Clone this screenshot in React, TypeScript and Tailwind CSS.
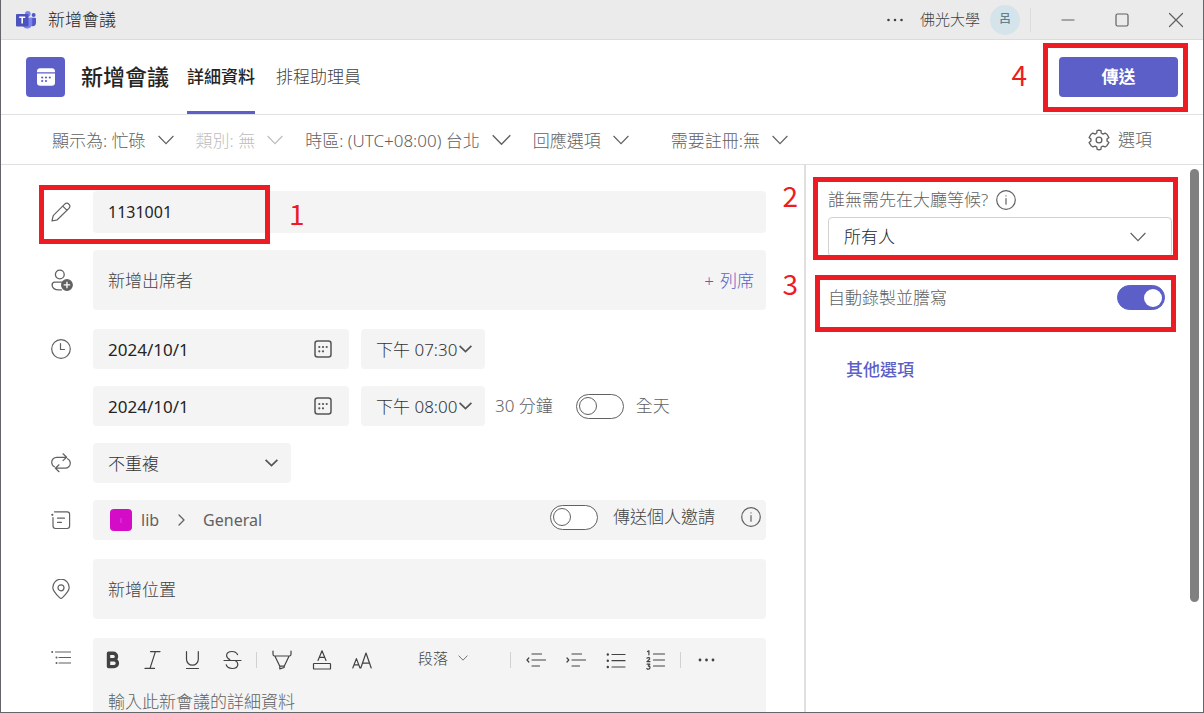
import { useState } from 'react';
import type { ReactNode } from 'react';
import clsx from 'clsx';

interface IconProps {
  className?: string;
  children: ReactNode;
  width?: number;
}

function Icon({ className, children, width = 1.2 }: IconProps) {
  return (
    <svg
      viewBox="0 0 20 20"
      fill="none"
      stroke="currentColor"
      strokeWidth={width}
      strokeLinecap="round"
      strokeLinejoin="round"
      className={clsx('shrink-0', className ?? 'size-5')}
      aria-hidden="true"
    >
      {children}
    </svg>
  );
}

function Chevron({ className }: { className?: string }) {
  return (
    <svg viewBox="0 0 16 10" fill="none" stroke="currentColor" strokeWidth="1.2" className={clsx('pointer-events-none shrink-0', className)} aria-hidden="true">
      <path d="M0.6 1 8 8.6 15.4 1" />
    </svg>
  );
}

function BoldChevron({ className }: { className?: string }) {
  return (
    <svg viewBox="0 0 13 8" fill="none" stroke="currentColor" strokeWidth="1.7" className={clsx('pointer-events-none h-2 w-[13px] shrink-0 text-[#555]', className)} aria-hidden="true">
      <path d="M0.6 0.8 6.5 6.6 12.4 0.8" />
    </svg>
  );
}

function InfoIcon() {
  return (
    <Icon className="size-5 text-[#616161]">
      <circle cx="10" cy="10" r="9.3" />
      <path d="M10 8.6v5.6M10 5.8v.1" />
    </Icon>
  );
}

function TeamsLogo() {
  return (
    <svg viewBox="0 0 20 18" className="h-[18px] w-5 shrink-0" aria-hidden="true">
      <circle cx="17.6" cy="3.9" r="2" fill="#5059c9" />
      <path d="M14 6.8h5.2c.5 0 .8.3.8.8v4.2a3.4 3.4 0 0 1-3.4 3.4A3 3 0 0 1 14 13.6z" fill="#5059c9" />
      <circle cx="11.8" cy="2.9" r="2.8" fill="#7b83eb" />
      <path d="M7 6.8h8.4c.5 0 .8.3.8.8v5.2a5 5 0 0 1-9.8 1z" fill="#7b83eb" />
      <rect x="0" y="3" width="12.5" height="12.5" rx="1" fill="#4b53bc" />
      <path d="M3.2 6.2h6M6.2 6.2v6.4" stroke="#fff" strokeWidth="1.6" />
    </svg>
  );
}

function CalendarBadge() {
  return (
    <div className="flex h-10 w-[39px] items-center justify-center rounded bg-[#5b5fc7]">
      <svg viewBox="0 0 18 18" className="size-[18px]" aria-hidden="true">
        <path d="M0 4.2V3.5A3.2 3.2 0 0 1 3.2.2h11.6A3.2 3.2 0 0 1 18 3.5v.7z" fill="#fff" />
        <path d="M0 5.6h18v9a3.2 3.2 0 0 1-3.2 3.2H3.2A3.2 3.2 0 0 1 0 14.6z" fill="#fff" />
        <g fill="#5b5fc7">
          <circle cx="5.2" cy="9.5" r="1.1" />
          <circle cx="9" cy="9.5" r="1.1" />
          <circle cx="12.8" cy="9.5" r="1.1" />
          <circle cx="5.2" cy="13" r="1.1" />
          <circle cx="9" cy="13" r="1.1" />
        </g>
      </svg>
    </div>
  );
}

function Marker({ className }: { className: string }) {
  return <div className={clsx('pointer-events-none absolute border-5 border-[#ed1c24]', className)} />;
}

function Step({ children, className }: { children: ReactNode; className: string }) {
  return (
    <span className={clsx("pointer-events-none absolute font-['Noto_Sans_CJK_TC',sans-serif] text-[28px] leading-7 font-normal text-[#ed1c24]", className)}>
      {children}
    </span>
  );
}

interface ToolbarSelectProps {
  label: string;
  options: string[];
  disabled?: boolean;
  large?: boolean;
}

function ToolbarSelect({ label, options, disabled, large }: ToolbarSelectProps) {
  return (
    <div className={clsx('flex items-center gap-3', disabled ? 'text-[#bdbdbd]' : 'text-[#616161]')}>
      <select aria-label={label} disabled={disabled} className="field-sizing-content appearance-none bg-transparent pt-0.5 opacity-100 outline-none">
        {options.map((option) => (
          <option key={option}>{option}</option>
        ))}
      </select>
      <Chevron className={large ? 'h-3 w-[19px]' : 'h-2.5 w-4'} />
    </div>
  );
}

interface SwitchProps {
  id: string;
  checked: boolean;
  onChange: (value: boolean) => void;
}

function Switch({ id, checked, onChange }: SwitchProps) {
  return (
    <input
      id={id}
      type="checkbox"
      role="switch"
      checked={checked}
      onChange={(e) => onChange(e.target.checked)}
      className={clsx(
        'flex h-[25px] w-12 shrink-0 appearance-none items-center rounded-full border px-0.5 before:block before:rounded-full',
        checked
          ? 'justify-end border-[#5b5fc7] bg-[#5b5fc7] before:size-[18px] before:bg-white'
          : 'justify-start border-[#616161] bg-white before:size-[18px] before:border before:border-[#616161]',
      )}
    />
  );
}

function Row({ icon, children, className }: { icon?: ReactNode; children: ReactNode; className?: string }) {
  return (
    <div className={clsx('relative flex gap-[22px]', className ?? 'items-center')}>
      <div className="w-5 shrink-0 text-[#616161]">{icon}</div>
      {children}
    </div>
  );
}

function DateTime({ label, time }: { label: string; time: string }) {
  return (
    <>
      <div className="flex h-10 w-64 items-center rounded bg-[#f4f4f4] pr-4 pl-[15px]">
        <input aria-label={`${label}日期`} defaultValue="2024/10/1" className="min-w-0 flex-1 bg-transparent pt-0.5 font-normal text-[#242424] outline-none" />
        <button type="button" aria-label={`選擇${label}日期`} className="text-[#555]">
          <Icon width={1.5} className="size-5">
            <rect x="2" y="2" width="16" height="16" rx="2.5" />
            <path d="M6.3 8h.01M10 8h.01M13.7 8h.01M6.3 12.3h.01M10 12.3h.01" strokeWidth="2.2" />
          </Icon>
        </button>
      </div>
      <div className="relative ml-3 flex h-10 w-31 items-center rounded bg-[#f4f4f4]">
        <select aria-label={`${label}時間`} className="h-full w-full appearance-none bg-transparent pt-0.5 pl-[15px] text-[#333] outline-none">
          <option>{time}</option>
        </select>
        <BoldChevron className="absolute right-[13px]" />
      </div>
    </>
  );
}

function ToolButton({ label, children }: { label: string; children: ReactNode }) {
  return (
    <button type="button" aria-label={label} className="flex h-10 w-10 shrink items-center justify-center text-[#424242]">
      {children}
    </button>
  );
}

function Separator({ className }: { className: string }) {
  return <div className={clsx('h-4 w-px shrink-0 bg-[#d1d1d1]', className)} />;
}

function EditorToolbar() {
  return (
    <div className="flex h-[44px] items-center">
      <ToolButton label="粗體">
        <Icon width={3.4}>
          <path d="M5.5 3.2h4.8a3.2 3.2 0 0 1 0 6.4H5.5zM5.5 9.8h5.500a3.4 3.4 0 0 1 0 6.8H5.5z" />
        </Icon>
      </ToolButton>
      <ToolButton label="斜體">
        <Icon>
          <path d="M7.5 1.6H17M2 18.4h9.500M12.4 1.6 7 18.4" />
        </Icon>
      </ToolButton>
      <ToolButton label="底線">
        <Icon>
          <path d="M3.5 1.5v7.8a5.9 5.9 0 0 0 11.8 0V1.5M3.5 18.5h12" />
        </Icon>
      </ToolButton>
      <ToolButton label="刪除線">
        <Icon>
          <path d="M14.5 4.6C13.6 2.6 11.6 1.5 9 1.5c-3.200 0-5.400 1.600-5.400 4 0 1.700 1 3 3.200 4.100M1 10.500h17M12.500 10.700c1.500.8 2.300 1.900 2.300 3.500 0 2.600-2.300 4.300-5.600 4.300-3 0-5.200-1.300-6-3.700" />
        </Icon>
      </ToolButton>
      <Separator className="mr-[5px] ml-[3px]" />
      <ToolButton label="醒目提示">
        <Icon>
          <path d="M1 1v3.200c0 1 .7 1.800 1.700 1.800h14.600c1 0 1.700-.8 1.700-1.800V1M3 6.200l4.800 10h4.400l4.800-10M7.800 16.200v2.600l4.400-1.300v-1.300" />
        </Icon>
      </ToolButton>
      <ToolButton label="字型色彩">
        <Icon>
          <path d="M6 10.500 10 .8l4 9.700M7.400 7.400h5.200" />
          <rect x="1.5" y="13.5" width="17" height="5.5" rx=".6" />
        </Icon>
      </ToolButton>
      <ToolButton label="字型大小">
        <Icon>
          <path d="M.8 18 4.400 8.600 8 18M2 14.800h4.800M8.800 18 14 3l5.200 15M10.300 13.200h7.400" />
        </Icon>
      </ToolButton>
      <div className="ml-9 flex items-center gap-2.5 pb-1 text-[15px] text-[#424242]">
        <select aria-label="段落樣式" className="field-sizing-content appearance-none bg-transparent outline-none">
          <option>段落</option>
        </select>
        <Chevron className="h-1.5 w-2.5" />
      </div>
      <Separator className="mr-[5px] ml-[42px]" />
      <ToolButton label="減少縮排">
        <Icon>
          <path d="M6 4h9.500M6 10h13.500M6 16h7.500M2.800 8 1 10l1.800 2" />
        </Icon>
      </ToolButton>
      <ToolButton label="增加縮排">
        <Icon>
          <path d="M6 4h9.500M6 10h13.500M6 16h7.500M1 8l1.800 2L1 12" />
        </Icon>
      </ToolButton>
      <ToolButton label="項目符號清單">
        <Icon>
          <path d="M6 4.500h13M6 10.700h13M6 17h13" />
          <path d="M1.800 4.500h.01M1.800 10.700h.01M1.800 17h.01" strokeWidth="2.4" />
        </Icon>
      </ToolButton>
      <ToolButton label="編號清單">
        <Icon>
          <path d="M7.500 4h11M7.500 10h11M7.500 16h11" />
          <path d="M1.500 1.500 2.900.8v4M1 8.200c1-1.200 3-.6 2.600.8-.3.900-1.600 1.600-2.600 2.600h3M1.100 14.200h2.700l-1.500 1.900c2.400-.2 2.200 3.100-.1 3.100-.6 0-1-.2-1.300-.6" />
        </Icon>
      </ToolButton>
      <Separator className="mr-1.5 ml-1" />
      <ToolButton label="更多">
        <Icon width={2.8}>
          <path d="M3 10h.01M9.500 10h.01M16 10h.01" />
        </Icon>
      </ToolButton>
    </div>
  );
}

export default function NewMeeting() {
  const [allDay, setAllDay] = useState(false);
  const [invite, setInvite] = useState(false);
  const [record, setRecord] = useState(true);

  return (
    <div className="flex h-screen flex-col overflow-hidden border-x border-b border-[#65656b] bg-white font-['Noto_Sans','Noto_Sans_CJK_TC',sans-serif] text-[17px] leading-6 font-light text-[#242424]">
      {/* Title bar */}
      <div className="flex h-10 shrink-0 items-center border-b border-[#dcdcdc] bg-[#ebebeb] pl-[15px]">
        <TeamsLogo />
        <span className="ml-3">新增會議</span>
        <div className="ml-auto flex items-center">
          <button type="button" aria-label="更多選項" className="text-[#424242]">
            <Icon width={2.6} className="size-5">
              <path d="M4.500 10h.01M11 10h.01M17.500 10h.01" />
            </Icon>
          </button>
          <span className="ml-4 pb-0.5 text-[15px] text-[#424242]">佛光大學</span>
          <span className="ml-2.5 flex size-[30px] items-center justify-center rounded-full bg-[#d5e4ea] pb-0.5 text-xs font-medium text-[#5f7f8a]">呂</span>
          <div className="mr-2.5 ml-2.5 h-6 w-px bg-[#dcdcdc]" />
          <button type="button" aria-label="最小化" className="flex w-[54px] justify-center text-[#616161]">
            <Icon>
              <path d="M4 10h12" />
            </Icon>
          </button>
          <button type="button" aria-label="最大化" className="flex w-[54px] justify-center text-[#616161]">
            <Icon>
              <rect x="4" y="4" width="12" height="12" rx="1.5" />
            </Icon>
          </button>
          <button type="button" aria-label="關閉" className="flex w-[54px] justify-center text-[#616161]">
            <Icon>
              <path d="m3.500 3.500 13 13M16.500 3.500l-13 13" />
            </Icon>
          </button>
        </div>
      </div>

      {/* Meeting header */}
      <header className="relative flex h-[75px] shrink-0 items-center border-b border-[#e0e0e0] pr-[25px] pl-[25px]">
        <CalendarBadge />
        <h1 className="ml-4 pb-0.5 text-[22px] font-medium">新增會議</h1>
        <nav className="ml-[18px] flex h-full gap-[21px]">
          <a href="#details" className="flex items-center border-b-3 border-[#5b5fc7] pt-[3px] font-medium">詳細資料</a>
          <a href="#scheduling" className="flex items-center text-[#424242]">排程助理員</a>
        </nav>
        <button type="button" className="ml-auto h-10 w-[119px] rounded bg-[#5b5fc7] font-bold text-white">傳送</button>
        <Marker className="top-[3px] right-[15px] h-[69px] w-[145px]" />
        <Step className="top-5 right-[176px]">4</Step>
      </header>

      {/* Meeting options */}
      <div className="flex h-[50px] shrink-0 items-center gap-[22px] border-b border-[#e0e0e0] pr-[51px] pl-[51px]">
        <ToolbarSelect label="顯示為" options={['顯示為: 忙碌']} />
        <ToolbarSelect label="類別" options={['類別: 無']} disabled />
        <ToolbarSelect label="時區" options={['時區: (UTC+08:00) 台北']} large />
        <ToolbarSelect label="回應選項" options={['回應選項']} />
        <div className="ml-5">
          <ToolbarSelect label="需要註冊" options={['需要註冊:無']} />
        </div>
        <button type="button" className="ml-auto flex items-center gap-2 text-[#616161]">
          <Icon className="size-[22px]">
            <circle cx="10" cy="10" r="2.6" />
            <path d="M8.200 1.500 8 3.600 6.300 4.600 4.400 3.700 2.600 5 1 7.800l1.700 1.400v1.700L1 12.300l1.800 2.900 1.700 1.100 1.900-.8 1.600.9.300 2.100 1.700.5 1.700-.5.300-2.100 1.600-.9 1.900.8 1.700-1.100 1.800-2.900-1.700-1.400V9.200L19 7.800 17.400 5l-1.800-1.300-1.900.9L12 3.600l-.2-2.100L10 1z" />
          </Icon>
          選項
        </button>
      </div>

      <div className="flex min-h-0 flex-1">
        {/* Form */}
        <main className="relative flex min-w-0 flex-1 flex-col gap-[17px] pt-[26px] pr-[38px] pl-[50px]">
          <Row
            icon={
              <Icon>
                <path d="M1 19l1.200-5.300L13.700 2.200a3 3 0 0 1 4.200 0 3 3 0 0 1 0 4.200L6.300 17.800zM11.800 4.200l4.200 4.200" />
              </Icon>
            }
          >
            <input aria-label="標題" defaultValue="1131001" className="h-[42px] min-w-0 flex-1 rounded bg-[#f4f4f4] px-[15px] text-base font-normal outline-none" />
            <Marker className="-top-1.5 -left-3 h-[59px] w-[231px]" />
            <Step className="top-2 left-[238px]">1</Step>
          </Row>

          <Row
            className="mb-0.5 items-center"
            icon={
              <Icon className="size-[22px]">
                <circle cx="8" cy="5" r="4" />
                <path d="M9.500 19H7c-3.500 0-6-1.700-6-4.400C1 13 2 12 3.500 12h7" />
                <circle cx="14.5" cy="14.5" r="4.8" fill="currentColor" />
                <path d="M14.500 12v5M12 14.500h5" stroke="#fff" />
              </Icon>
            }
          >
            <div className="flex h-15 min-w-0 flex-1 items-center rounded bg-[#f4f4f4] pr-3 pl-[15px]">
              <input aria-label="出席者" placeholder="新增出席者" className="min-w-0 flex-1 bg-transparent pt-0.5 outline-none placeholder:text-[#424242]" />
              <button type="button" className="flex gap-1.5 pt-0.5 text-[#5b5fc7]">
                <span>+</span>
                <span>列席</span>
              </button>
            </div>
          </Row>

          <Row
            icon={
              <Icon>
                <circle cx="10" cy="10" r="9.3" />
                <path d="M9.500 4.500v6h4" />
              </Icon>
            }
          >
            <div className="flex items-center">
              <DateTime label="開始" time="下午 07:30" />
            </div>
          </Row>

          <Row>
            <div className="flex items-center text-[#616161]">
              <DateTime label="結束" time="下午 08:00" />
              <span className="ml-2.5">30 分鐘</span>
              <div className="ml-[23px] flex items-center gap-3">
                <Switch id="all-day" checked={allDay} onChange={setAllDay} />
                <label htmlFor="all-day">全天</label>
              </div>
            </div>
          </Row>

          <Row
            icon={
              <Icon>
                <path d="M3.500 13.800A5 5 0 0 1 .7 9.300 5 5 0 0 1 5.700 4.300H15.500M12 .8l3.600 3.500L12 7.600M16.500 5.700a5 5 0 0 1 2.800 4.500 5 5 0 0 1-5 5H4.600M8 11.800l-3.600 3.400L8 18.700" />
              </Icon>
            }
          >
            <div className="relative flex h-10 w-[198px] items-center rounded bg-[#f4f4f4]">
              <select aria-label="重複" className="h-full w-full appearance-none bg-transparent px-[15px] pt-0.5 text-[#333] outline-none">
                <option>不重複</option>
              </select>
              <BoldChevron className="absolute right-[13px]" />
            </div>
          </Row>

          <Row
            className="mb-0.5 items-center"
            icon={
              <Icon>
                <path d="M3.500 1.800h12.700a2.400 2.400 0 0 1 2.400 2.400v11.900a2.400 2.400 0 0 1-2.400 2.400H4.400A2.400 2.400 0 0 1 2 16.100V7.500M6.500 8.200h7M6.500 12.300h4" />
                <path d="M1.300 4.800h.01" strokeWidth="2.2" />
              </Icon>
            }
          >
            <div className="flex h-10 min-w-0 flex-1 items-center rounded bg-[#f4f4f4] pr-[5px] pl-[17px] text-[#616161]">
              <span className="flex size-[22px] items-center justify-center rounded bg-[#d40cc8] text-[8px] text-[#f08ae8]">l</span>
              <span className="ml-[9px] text-base font-normal">lib</span>
              <Icon width={1.3} className="mx-3 size-5">
                <path d="m8 5 5 5-5 5" />
              </Icon>
              <span className="text-base font-normal">General</span>
              <div className="ml-auto flex items-center pb-1.5 text-[#424242]">
                <Switch id="invite" checked={invite} onChange={setInvite} />
                <label htmlFor="invite" className="ml-[15px]">傳送個人邀請</label>
                <button type="button" aria-label="傳送個人邀請說明" className="ml-[26px]">
                  <InfoIcon />
                </button>
              </div>
            </div>
          </Row>

          <Row
            className="mb-0.5 items-center"
            icon={
              <Icon>
                <path d="M10 19.300c-.6 0-1-.3-1.400-.7C5 15 1.800 12 1.800 8.400a8.200 8.200 0 0 1 16.400 0c0 3.600-3.200 6.600-6.800 10.200-.4.4-.8.700-1.400.7z" />
                <circle cx="10" cy="8.8" r="3" />
              </Icon>
            }
          >
            <input aria-label="位置" placeholder="新增位置" className="h-15 min-w-0 flex-1 rounded bg-[#f4f4f4] px-[15px] outline-none placeholder:text-[#424242]" />
          </Row>

          <Row
            className="items-start"
            icon={
              <Icon className="mt-2.5 size-5">
                <path d="M4.500 4h15M8 9.500h11.500M8 15h11.500" />
                <path d="M1.200 4h.01M5.500 9.500h.01M5.500 15h.01" strokeWidth="2" />
              </Icon>
            }
          >
            <div className="min-w-0 flex-1 rounded bg-[#f4f4f4]">
              <EditorToolbar />
              <textarea aria-label="詳細資料" placeholder="輸入此新會議的詳細資料" className="block h-40 w-full resize-none bg-transparent px-[15px] pt-2 outline-none placeholder:text-[#616161]" />
            </div>
          </Row>
          <Step className="top-4 right-[6px]">2</Step>
          <Step className="top-[104px] right-[6px]">3</Step>
        </main>

        {/* Side options */}
        <aside className="relative flex w-[399px] shrink-0 flex-col border-l-2 border-[#e0e0e0] pt-[23px] pr-[31px] pl-[22px] text-[#616161]">
          <div className="flex items-center gap-2">
            <label htmlFor="lobby">誰無需先在大廳等候?</label>
            <InfoIcon />
          </div>
          <div className="relative mt-[5px] flex h-10 items-center">
            <select id="lobby" className="h-full w-full appearance-none rounded border border-[#d1d1d1] bg-white px-[15px] text-[#242424] outline-none">
              <option>所有人</option>
            </select>
            <Chevron className="absolute right-[26px] h-2.5 w-4" />
          </div>
          <div className="mt-7 flex items-center justify-between pr-[7px]">
            <label htmlFor="record">自動錄製並謄寫</label>
            <Switch id="record" checked={record} onChange={setRecord} />
          </div>
          <a href="#more-options" className="mt-12 self-start pl-[18px] font-medium text-[#5b5fc7]">其他選項</a>
          <Marker className="top-3 right-[25px] left-[7px] h-[83px]" />
          <Marker className="top-[110px] right-[27px] left-[9px] h-[57px]" />
          <div className="absolute top-1 right-1 h-[433px] w-[9px] rounded-full bg-[#808080]" />
        </aside>
      </div>
    </div>
  );
}
